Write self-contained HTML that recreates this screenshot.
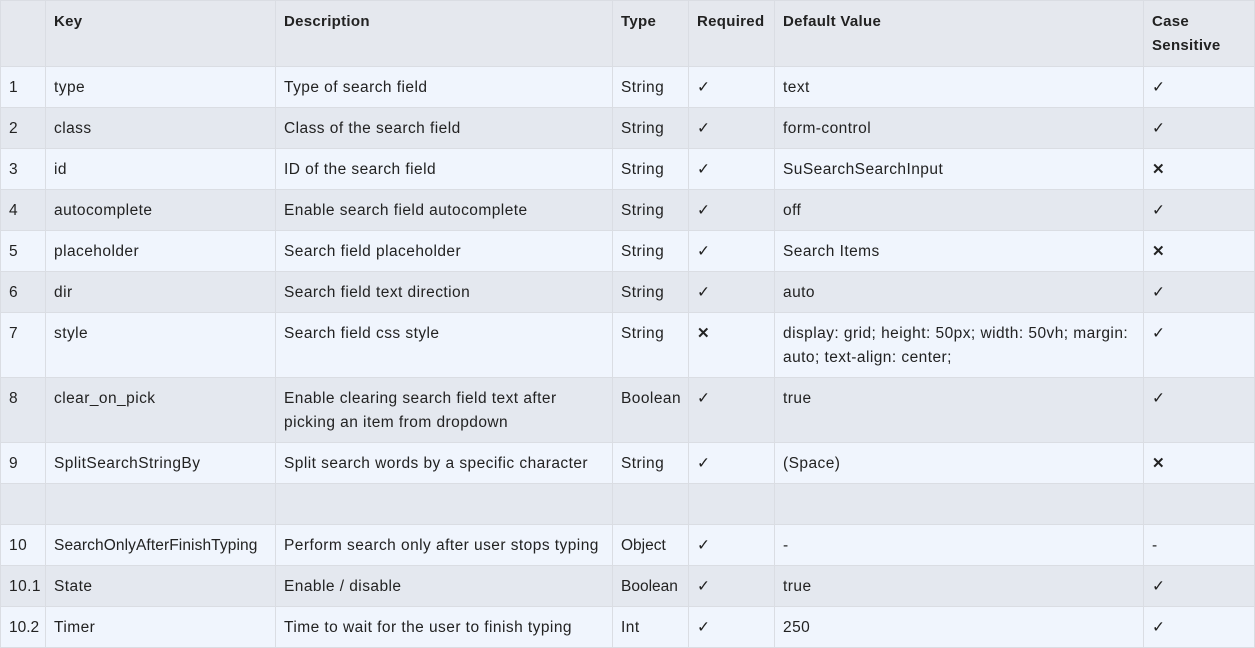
<!DOCTYPE html>
<html><head><meta charset="utf-8"><style>
html,body{margin:0;padding:0;background:#fff;}
body{width:1255px;height:645px;overflow:hidden;font-family:"Liberation Sans",sans-serif;font-size:15.5px;color:#222;}
table{border-collapse:collapse;table-layout:fixed;width:1254px;margin:0 0 0 0;}
td,th{border:1px solid #dadde3;padding:9px 8px 7px 8px;line-height:24px;vertical-align:top;text-align:left;height:24px;letter-spacing:0.45px;white-space:nowrap;overflow:hidden;}
th{font-weight:bold;background:#e5e8ee;height:49px;padding-top:9px;letter-spacing:0.3px;white-space:normal;font-size:15px;}
tr:nth-child(odd) td{background:#f0f5fd;}
tr:nth-child(even) td{background:#e4e8ef;}
.x{font-size:15px;font-weight:bold;}
</style></head><body>
<table>
<colgroup><col style="width:45px"><col style="width:230px"><col style="width:337px"><col style="width:76px"><col style="width:86px"><col style="width:369px"><col style="width:111px"></colgroup>
<thead><tr><th></th><th>Key</th><th>Description</th><th>Type</th><th>Required</th><th>Default Value</th><th>Case Sensitive</th></tr></thead>
<tbody>
<tr><td>1</td><td>type</td><td>Type of search field</td><td>String</td><td>✓</td><td>text</td><td>✓</td></tr>
<tr><td>2</td><td>class</td><td>Class of the search field</td><td>String</td><td>✓</td><td>form-control</td><td>✓</td></tr>
<tr><td>3</td><td>id</td><td>ID of the search field</td><td>String</td><td>✓</td><td>SuSearchSearchInput</td><td class="x">✕</td></tr>
<tr><td>4</td><td>autocomplete</td><td>Enable search field autocomplete</td><td>String</td><td>✓</td><td>off</td><td>✓</td></tr>
<tr><td>5</td><td>placeholder</td><td>Search field placeholder</td><td>String</td><td>✓</td><td>Search Items</td><td class="x">✕</td></tr>
<tr><td>6</td><td>dir</td><td>Search field text direction</td><td>String</td><td>✓</td><td>auto</td><td>✓</td></tr>
<tr><td>7</td><td>style</td><td>Search field css style</td><td>String</td><td class="x">✕</td><td>display: grid; height: 50px; width: 50vh; margin:<br>auto; text-align: center;</td><td>✓</td></tr>
<tr><td>8</td><td>clear_on_pick</td><td>Enable clearing search field text after<br>picking an item from dropdown</td><td>Boolean</td><td>✓</td><td>true</td><td>✓</td></tr>
<tr><td>9</td><td>SplitSearchStringBy</td><td>Split search words by a specific character</td><td>String</td><td>✓</td><td>(Space)</td><td class="x">✕</td></tr>
<tr><td></td><td></td><td></td><td></td><td></td><td></td><td></td></tr>
<tr><td>10</td><td style="letter-spacing:0.1px">SearchOnlyAfterFinishTyping</td><td>Perform search only after user stops typing</td><td style="letter-spacing:0">Object</td><td>✓</td><td>-</td><td>-</td></tr>
<tr><td>10.1</td><td>State</td><td>Enable / disable</td><td style="letter-spacing:0">Boolean</td><td>✓</td><td>true</td><td>✓</td></tr>
<tr><td style="letter-spacing:0">10.2</td><td>Timer</td><td>Time to wait for the user to finish typing</td><td>Int</td><td>✓</td><td>250</td><td>✓</td></tr>
</tbody></table>
</body></html>
